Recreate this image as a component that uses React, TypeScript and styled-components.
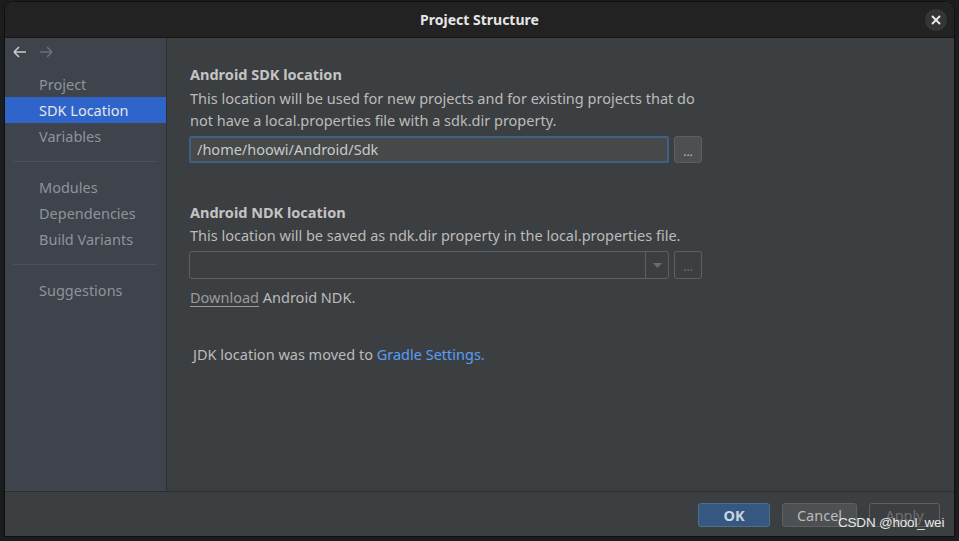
import React from "react";
import styled, { createGlobalStyle } from "styled-components";

const Global = createGlobalStyle`
  html, body { margin: 0; padding: 0; background: #1b1c1d; }
  body { font-family: "Noto Sans", "Open Sans", sans-serif; }
  * { box-sizing: border-box; }
`;

const Page = styled.div`
  width: 959px;
  height: 541px;
  padding: 1px 4px 4px 4px;
  background: #1b1c1d;
  position: relative;
  overflow: hidden;
`;

const Window = styled.div`
  width: 951px;
  height: 536px;
  display: flex;
  flex-direction: column;
  border: 1px solid #0f0f0f;
  border-radius: 10px 10px 0 0;
  overflow: hidden;
  background: #3c3f41;
`;

const TitleBar = styled.div`
  height: 36px;
  flex: none;
  background: #222222;
  border-bottom: 1px solid #151515;
  display: flex;
  align-items: center;
  justify-content: center;
  position: relative;
`;

const Title = styled.div`
  color: #e6e6e6;
  font-size: 14px;
  font-weight: 700;
`;

const CloseButton = styled.div`
  position: absolute;
  right: 7px;
  top: 7px;
  width: 22px;
  height: 22px;
  border-radius: 50%;
  background: #353535;
  display: flex;
  align-items: center;
  justify-content: center;
`;

const Body = styled.div`
  flex: 1;
  display: flex;
  min-height: 0;
`;

const Sidebar = styled.div`
  width: 162px;
  flex: none;
  background: #3e434c;
  border-right: 1px solid #2e3033;
  display: flex;
  flex-direction: column;
`;

const NavRow = styled.div`
  height: 33px;
  display: flex;
  align-items: center;
  gap: 12px;
  padding-left: 8px;
  padding-bottom: 5px;
`;

const Item = styled.div<{ $selected?: boolean }>`
  height: 26px;
  line-height: 26px;
  padding-left: 34px;
  font-size: 14.5px;
  color: ${(p) => (p.$selected ? "#e4e6ea" : "#8f949b")};
  background: ${(p) => (p.$selected ? "#2f65ca" : "transparent")};
`;

const Divider = styled.div`
  height: 1px;
  background: #4d525a;
  margin: 12px 9px 12px 8px;
`;

const Content = styled.div`
  flex: 1;
  padding: 25px 0 0 23px;
  display: flex;
  flex-direction: column;
  color: #bbbbbb;
  font-size: 14.5px;
`;

const Heading = styled.div<{ $top?: number }>`
  font-weight: 700;
  line-height: 22px;
  margin-top: ${(p) => p.$top ?? 0}px;
  color: #c4c4c4;
`;

const Line = styled.div<{ $top?: number; $indent?: number }>`
  line-height: 22px;
  margin-top: ${(p) => p.$top ?? 0}px;
  padding-left: ${(p) => p.$indent ?? 0}px;
  white-space: nowrap;
`;

const FieldRow = styled.div<{ $top: number }>`
  display: flex;
  gap: 5px;
  margin-top: ${(p) => p.$top}px;
  margin-left: -1px;
`;

const TextField = styled.div`
  width: 480px;
  height: 27px;
  background: #45494a;
  border: 2px solid #3d6185;
  border-radius: 2px;
  padding-left: 6px;
  line-height: 23px;
  color: #c8c8c8;
  font-size: 14.5px;
`;

const Combo = styled.div`
  width: 480px;
  height: 28px;
  border: 1px solid #5e6060;
  border-radius: 3px;
  display: flex;
  justify-content: flex-end;
`;

const ComboArrow = styled.div`
  width: 23px;
  border-left: 1px solid #5e6060;
  display: flex;
  align-items: center;
  justify-content: center;
`;

const DotsButton = styled.div<{ $disabled?: boolean }>`
  width: 28px;
  height: ${(p) => (p.$disabled ? 28 : 27)}px;
  border: 1px solid #5e6060;
  border-radius: 3px;
  background: ${(p) => (p.$disabled ? "transparent" : "#4c5052")};
  color: ${(p) => (p.$disabled ? "#6f7274" : "#bbbbbb")};
  font-size: 12px;
  display: flex;
  align-items: center;
  justify-content: center;
  padding-top: 3px;
`;

const Underlined = styled.span`
  color: #9a9a9a;
  text-decoration: underline;
  text-underline-offset: 3px;
`;

const Link = styled.span`
  color: #589df6;
`;

const Footer = styled.div`
  height: 45px;
  flex: none;
  border-top: 1px solid #2b2d2e;
  display: flex;
  justify-content: flex-end;
  align-items: flex-start;
  padding: 11px 14px 0 0;
  gap: 12px;
`;

const Button = styled.div<{ $kind: "primary" | "normal" | "disabled"; $w: number }>`
  width: ${(p) => p.$w}px;
  height: 24px;
  border-radius: 3px;
  display: flex;
  align-items: center;
  justify-content: center;
  font-size: 14.5px;
  font-weight: ${(p) => (p.$kind === "primary" ? 700 : 400)};
  background: ${(p) =>
    p.$kind === "primary" ? "#365880" : p.$kind === "normal" ? "#4c5052" : "transparent"};
  border: 1px solid
    ${(p) => (p.$kind === "primary" ? "#4c708c" : "#5e6060")};
  color: ${(p) =>
    p.$kind === "primary" ? "#c9d4e0" : p.$kind === "normal" ? "#bbbbbb" : "#6d7072"};
`;

const Watermark = styled.div`
  position: absolute;
  left: 838px;
  top: 515px;
  font-family: "Liberation Sans", Arial, sans-serif;
  font-size: 13.5px;
  color: #e8e8e8;
  letter-spacing: -0.2px;
`;

const BackArrow = () => (
  <svg width="14" height="12" viewBox="0 0 14 12">
    <path d="M1 6H13M1 6L6 1M1 6L6 11" stroke="#c8cacc" strokeWidth="1.6" fill="none" />
  </svg>
);

const FwdArrow = () => (
  <svg width="14" height="12" viewBox="0 0 14 12">
    <path d="M13 6H1M13 6L8 1M13 6L8 11" stroke="#6a6e74" strokeWidth="1.6" fill="none" />
  </svg>
);

export default function App() {
  return (
    <>
      <Global />
      <Page>
        <Window>
          <TitleBar>
            <Title>Project Structure</Title>
            <CloseButton>
              <svg width="10" height="10" viewBox="0 0 10 10">
                <path d="M1 1L9 9M9 1L1 9" stroke="#eeeeee" strokeWidth="1.8" />
              </svg>
            </CloseButton>
          </TitleBar>
          <Body>
            <Sidebar>
              <NavRow>
                <BackArrow />
                <FwdArrow />
              </NavRow>
              <Item>Project</Item>
              <Item $selected>SDK Location</Item>
              <Item>Variables</Item>
              <Divider />
              <Item>Modules</Item>
              <Item>Dependencies</Item>
              <Item>Build Variants</Item>
              <Divider />
              <Item>Suggestions</Item>
            </Sidebar>
            <Content>
              <Heading>Android SDK location</Heading>
              <Line $top={2}>This location will be used for new projects and for existing projects that do</Line>
              <Line>not have a local.properties file with a sdk.dir property.</Line>
              <FieldRow $top={5}>
                <TextField>/home/hoowi/Android/Sdk</TextField>
                <DotsButton>...</DotsButton>
              </FieldRow>
              <Heading $top={38}>Android NDK location</Heading>
              <Line $top={1}>This location will be saved as ndk.dir property in the local.properties file.</Line>
              <FieldRow $top={5}>
                <Combo>
                  <ComboArrow>
                    <svg width="9" height="5" viewBox="0 0 9 5">
                      <path d="M0 0H9L4.5 5Z" fill="#6a6d70" />
                    </svg>
                  </ComboArrow>
                </Combo>
                <DotsButton $disabled>...</DotsButton>
              </FieldRow>
              <Line $top={7}>
                <Underlined>Download</Underlined> Android NDK.
              </Line>
              <Line $top={35} $indent={3}>
                JDK location was moved to <Link>Gradle Settings.</Link>
              </Line>
            </Content>
          </Body>
          <Footer>
            <Button $kind="primary" $w={72}>OK</Button>
            <Button $kind="normal" $w={75}>Cancel</Button>
            <Button $kind="disabled" $w={71}>Apply</Button>
          </Footer>
        </Window>
        <Watermark>CSDN @hool_wei</Watermark>
      </Page>
    </>
  );
}
